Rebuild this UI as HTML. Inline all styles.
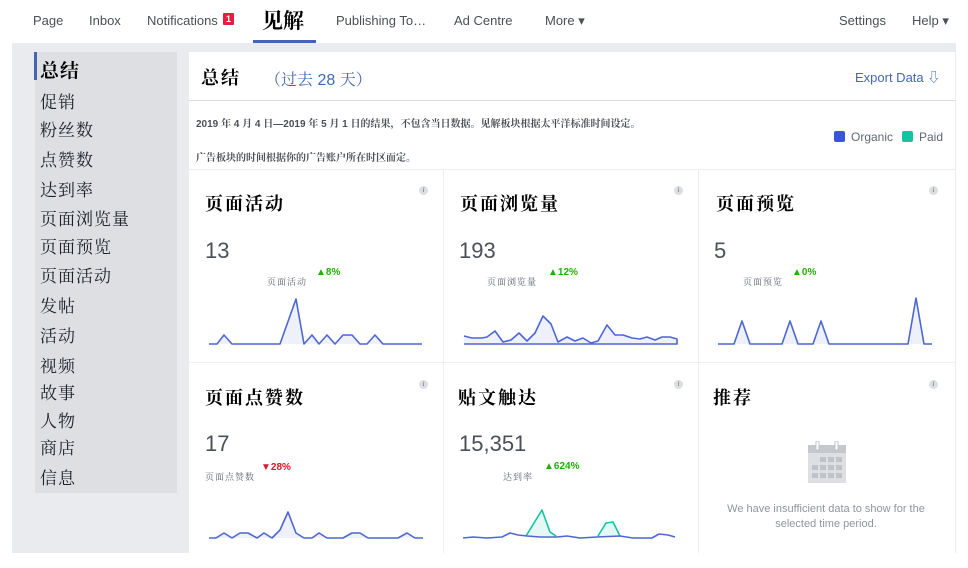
<!DOCTYPE html>
<html><head><meta charset="utf-8"><style>
*{margin:0;padding:0;box-sizing:border-box}
body{width:968px;height:568px;background:#fff;position:relative;overflow:hidden;font-family:"Liberation Sans","Noto Sans CJK SC",sans-serif}
.a{position:absolute;white-space:nowrap}
.nav{font-size:13px;color:#4b4f56;top:13px}
.cn{font-family:"Liberation Serif","Noto Serif CJK SC",serif;font-weight:bold;color:#000}
.side{font-family:"Liberation Serif","Noto Serif CJK SC",serif;font-size:17px;letter-spacing:1px;color:#1d2129;left:40px}
.ct{font-size:18px;letter-spacing:2px}
.num{font-size:22px;color:#4b4f56}
.sub{font-family:"Liberation Serif","Noto Serif CJK SC",serif;font-size:9px;color:#606770;letter-spacing:1px}
.up{font-size:10px;color:#1db400;font-weight:bold}
.dn{font-size:10px;color:#e4122b;font-weight:bold}
.info{width:9px;height:9px;border-radius:50%;background:#dcdee2;color:#606770;font-size:7px;font-style:italic;text-align:center;line-height:9px;font-family:"Liberation Serif",serif}
</style></head><body>
<div class="a nav" style="left:33px">Page</div>
<div class="a nav" style="left:89px">Inbox</div>
<div class="a nav" style="left:147px">Notifications</div>
<div class="a" style="left:223px;top:13px;width:11px;height:12px;background:#e41e3f;color:#fff;font-size:9px;font-weight:bold;text-align:center;line-height:12px;border-radius:1px">1</div>
<div class="a cn" style="left:262px;top:5px;font-size:21px">见解</div>
<div class="a" style="left:253px;top:40px;width:63px;height:3px;background:#4267b2"></div>
<div class="a nav" style="left:336px">Publishing To…</div>
<div class="a nav" style="left:454px">Ad Centre</div>
<div class="a nav" style="left:545px">More ▾</div>
<div class="a nav" style="left:839px">Settings</div>
<div class="a nav" style="left:912px">Help ▾</div>

<div class="a" style="left:12px;top:43px;width:944px;height:510px;background:#e9ebee"></div>
<div class="a" style="left:35px;top:52px;width:142px;height:441px;background:#dddfe2"></div>
<div class="a" style="left:34px;top:52px;width:3px;height:28px;background:#4267b2"></div>
<div class="a cn" style="left:40px;top:56px;font-size:19px;letter-spacing:1px">总结</div>
<div class="a side" style="top:88px">促销</div>
<div class="a side" style="top:116px">粉丝数</div>
<div class="a side" style="top:146px">点赞数</div>
<div class="a side" style="top:176px">达到率</div>
<div class="a side" style="top:205px">页面浏览量</div>
<div class="a side" style="top:233px">页面预览</div>
<div class="a side" style="top:262px">页面活动</div>
<div class="a side" style="top:292px">发帖</div>
<div class="a side" style="top:322px">活动</div>
<div class="a side" style="top:352px">视频</div>
<div class="a side" style="top:379px">故事</div>
<div class="a side" style="top:407px">人物</div>
<div class="a side" style="top:434px">商店</div>
<div class="a side" style="top:464px">信息</div>

<div class="a" style="left:189px;top:52px;width:766px;height:501px;background:#fff"></div>
<div class="a cn" style="left:201px;top:64px;font-size:18px;letter-spacing:2px">总结</div>
<div class="a" style="left:265px;top:67px;font-size:16px;color:#4267b2;font-family:'Liberation Sans','Noto Serif CJK SC',serif">（过去 28 天）</div>
<div class="a" style="left:855px;top:67px;font-size:13px;color:#4267b2">Export Data ⇩</div>
<div class="a" style="left:189px;top:100px;width:766px;height:1px;background:#dddfe2"></div>
<div class="a" style="left:196px;top:115px;font-size:10px;color:#4b4f56;font-weight:bold;font-family:'Liberation Sans','Noto Serif CJK SC',serif">2019 年 4 月 4 日—2019 年 5 月 1 日的结果，不包含当日数据。见解板块根据太平洋标准时间设定。</div>
<div class="a" style="left:196px;top:149px;font-size:10px;color:#4b4f56;font-weight:bold;font-family:'Liberation Serif','Noto Serif CJK SC',serif">广告板块的时间根据你的广告账户所在时区而定。</div>
<div class="a" style="left:834px;top:131px;width:11px;height:11px;background:#3b55d9;border-radius:2px"></div>
<div class="a" style="left:851px;top:130px;font-size:12px;color:#606770">Organic</div>
<div class="a" style="left:902px;top:131px;width:11px;height:11px;background:#12c4a0;border-radius:2px"></div>
<div class="a" style="left:919px;top:130px;font-size:12px;color:#606770">Paid</div>

<div class="a" style="left:189px;top:169px;width:766px;height:1px;background:#eceef1"></div>
<div class="a" style="left:189px;top:362px;width:766px;height:1px;background:#eceef1"></div>
<div class="a" style="left:443px;top:169px;width:1px;height:384px;background:#eceef1"></div>
<div class="a" style="left:698px;top:169px;width:1px;height:384px;background:#eceef1"></div>

<div class="a cn ct" style="left:205px;top:190px">页面活动</div>
<div class="a cn ct" style="left:460px;top:190px">页面浏览量</div>
<div class="a cn ct" style="left:716px;top:190px">页面预览</div>
<div class="a cn ct" style="left:205px;top:384px">页面点赞数</div>
<div class="a cn ct" style="left:458px;top:384px">贴文触达</div>
<div class="a cn ct" style="left:713px;top:384px">推荐</div>
<div class="a info" style="left:419px;top:186px">i</div>
<div class="a info" style="left:674px;top:186px">i</div>
<div class="a info" style="left:929px;top:186px">i</div>
<div class="a info" style="left:419px;top:380px">i</div>
<div class="a info" style="left:674px;top:380px">i</div>
<div class="a info" style="left:929px;top:380px">i</div>

<div class="a num" style="left:205px;top:238px">13</div>
<div class="a num" style="left:459px;top:238px">193</div>
<div class="a num" style="left:714px;top:238px">5</div>
<div class="a num" style="left:205px;top:431px">17</div>
<div class="a num" style="left:459px;top:431px">15,351</div>

<div class="a sub" style="left:267px;top:275px">页面活动</div><div class="a up" style="left:316px;top:267px">▲8%</div>
<div class="a sub" style="left:487px;top:275px">页面浏览量</div><div class="a up" style="left:548px;top:267px">▲12%</div>
<div class="a sub" style="left:743px;top:275px">页面预览</div><div class="a up" style="left:792px;top:267px">▲0%</div>
<div class="a sub" style="left:205px;top:470px">页面点赞数</div><div class="a dn" style="left:261px;top:462px">▼28%</div>
<div class="a sub" style="left:503px;top:470px">达到率</div><div class="a up" style="left:544px;top:461px">▲624%</div>

<svg class="a" style="left:808px;top:441px" width="38" height="42" viewBox="0 0 38 42">
<rect x="0" y="4" width="38" height="38" fill="#dddfe2"/>
<rect x="0" y="4" width="38" height="8" fill="#c4c7cc"/>
<rect x="8" y="0" width="3" height="9" fill="#fff" stroke="#bec2c9"/>
<rect x="27" y="0" width="3" height="9" fill="#fff" stroke="#bec2c9"/>
<g fill="#bec2c9"><rect x="12" y="16" width="6" height="5"/><rect x="20" y="16" width="6" height="5"/><rect x="28" y="16" width="6" height="5"/>
<rect x="4" y="24" width="6" height="5"/><rect x="12" y="24" width="6" height="5"/><rect x="20" y="24" width="6" height="5"/><rect x="28" y="24" width="6" height="5"/>
<rect x="4" y="32" width="6" height="5"/><rect x="12" y="32" width="6" height="5"/><rect x="20" y="32" width="6" height="5"/><rect x="28" y="32" width="6" height="5"/></g>
</svg>
<div class="a" style="left:712px;top:502px;width:228px;text-align:center;white-space:normal;font-size:11px;color:#90949c;line-height:15px">We have insufficient data to show for the selected time period.</div>

<svg class="a" style="left:0;top:0" width="968" height="568">
<g fill="none" stroke="#4c67d4" stroke-width="1.6" stroke-linejoin="round">
<polyline fill="#eef0fa" points="209,344 217,344 224,335 232,344 280,344 296,299 304,344 312,335 319,344 327,335 335,344 343,335 352,335 360,344 367,344 375,335 383,344 422,344"/>
<polyline fill="#eef0fa" points="464,336 472,338 482,338 487,337 495,331 503,342 511,340 519,333 527,341 535,333 543,316 551,324 558,342 567,337 575,341 583,338 591,343 598,341 607,325 615,335 623,335 632,338 640,339 647,337 655,340 662,337 670,337 677,339 677,344 464,344"/>
<polyline fill="#eef0fa" points="718,344 734,344 742,321 750,344 782,344 790,321 798,344 813,344 821,321 829,344 908,344 916,298 924,344 932,344"/>
<polyline fill="#eef0fa" points="209,538 216,538 224,533 232,538 240,533 248,533 257,538 264,533 272,538 280,530 288,512 296,533 304,538 312,538 319,533 327,538 343,538 352,533 360,533 368,538 398,538 407,533 415,538 423,538"/>
<polyline stroke="#12c4a0" fill="#e6f8f4" points="526,536 542,510 550,532 556,536"/>
<polyline stroke="#12c4a0" fill="#e6f8f4" points="598,536 606,523 613,522 620,536"/>
<polyline points="463,538 473,537 487,538 502,537 510,533 518,535 527,536 540,537 557,537 567,536 580,538 597,537 620,536 633,538 652,538 659,534 668,535 675,537"/>
</g></svg>
</body></html>
